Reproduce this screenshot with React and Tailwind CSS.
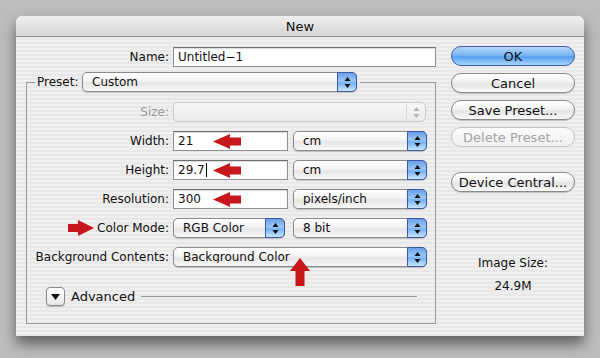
import React from "react";

const RED = "#c8161d";

function LeftArrow({ className }) {
  return (
    <svg width="28" height="15" viewBox="0 0 28 15" className={className}>
      <polygon points="0,7.5 17,0 17,3.5 28,3.5 28,11.5 17,11.5 17,15" fill={RED} />
    </svg>
  );
}

function RightArrow() {
  return (
    <svg width="26" height="16" viewBox="0 0 26 16">
      <polygon points="26,8 10,0 10,4 0,4 0,12 10,12 10,16" fill={RED} />
    </svg>
  );
}

function UpArrow({ className }) {
  return (
    <svg width="20" height="28" viewBox="0 0 20 28" className={className}>
      <polygon points="10,0 20,13 14.5,13 14.5,28 5.5,28 5.5,13 0,13" fill={RED} />
    </svg>
  );
}

function Stepper({ disabled }) {
  const c = disabled ? "#b5b5b5" : "#111";
  return (
    <svg width="7" height="13" viewBox="0 0 7 13">
      <polygon points="3.5,1 6.5,5 0.5,5" fill={c} />
      <polygon points="0.5,8 6.5,8 3.5,12" fill={c} />
    </svg>
  );
}

function Select({ value, className = "", disabled, children }) {
  if (disabled) {
    return (
      <div className={`flex h-[20px] items-center rounded-[5px] border border-[#cacaca] bg-[linear-gradient(#f6f6f6,#ececec)] ${className}`}>
        <span className="flex-1" />
        <div className="flex h-full w-[19px] items-center justify-center border-l border-[#dcdcdc]">
          <Stepper disabled />
        </div>
      </div>
    );
  }
  return (
    <div className={`relative flex h-[20px] items-center rounded-[5px] border border-[#8a8a8a] bg-[linear-gradient(#ffffff,#f3f3f3_45%,#e6e6e6_55%,#f7f7f7)] shadow-[0_1px_1px_rgba(0,0,0,0.18)] ${className}`}>
      <span className="flex-1 truncate pl-[9px] leading-none">{value}</span>
      <div className="-my-px -mr-px flex h-[20px] w-[20px] items-center justify-center rounded-r-[5px] border border-[#3d5aa6] bg-[linear-gradient(#6a9fe9,#9cc8f5_45%,#74b0f1_55%,#c8e6fe)]">
        <Stepper />
      </div>
      {children}
    </div>
  );
}

function TextField({ value, className = "", caret, children }) {
  return (
    <div className={`relative flex h-[20px] items-center border border-[#8f8f8f] border-t-[#6e6e6e] bg-white pl-[4px] shadow-[inset_0_1px_1px_rgba(0,0,0,0.15)] ${className}`}>
      <span className="leading-none">{value}</span>
      {caret && <span className="ml-px h-[14px] w-px bg-black" />}
      {children}
    </div>
  );
}

function Button({ label, primary, disabled }) {
  const style = primary
    ? "border-[#3f5ea9] bg-[linear-gradient(#b5d6f8,#7ab7f2_45%,#569ff0_55%,#a9d6fc)]"
    : disabled
    ? "border-[#c4c4c4] bg-[linear-gradient(#fbfbfb,#f0f0f0)] text-[#a3a3a3]"
    : "border-[#8a8a8a] bg-[linear-gradient(#ffffff,#f3f3f3_45%,#e3e3e3_55%,#fafafa)] shadow-[0_1px_1px_rgba(0,0,0,0.2)]";
  return (
    <div className={`flex h-[20px] w-[124px] items-center justify-center rounded-full border text-[13px] leading-none ${style}`}>
      {label}
    </div>
  );
}

function Row({ label, labelClass = "", children, arrow }) {
  return (
    <div className="flex h-[20px] items-center">
      <div className={`flex w-[134px] items-center justify-end gap-[3px] ${labelClass}`}>
        {arrow}
        <span>{label}</span>
      </div>
      <div className="ml-[4px] flex items-center">{children}</div>
    </div>
  );
}

export default function App() {
  return (
    <div className="h-[358px] w-[600px] bg-[#bdbdbd] pl-[16px] pt-[16px] font-['DejaVu_Sans',sans-serif] text-[12px] text-[#111]">
      <div className="flex h-[320px] w-[568px] flex-col overflow-hidden rounded-t-[6px] bg-[repeating-linear-gradient(to_bottom,#efefef_0px,#efefef_2px,#e8e8e8_2px,#e8e8e8_4px)] shadow-[0_8px_14px_rgba(0,0,0,0.5)]">
        <div className="flex h-[21px] shrink-0 items-center justify-center border-b border-[#8c8c8c] bg-[linear-gradient(#efefef,#d5d5d5)] pt-px text-[13px]">
          New
        </div>

        <div className="flex flex-1 pt-[10px]">
          {/* left side */}
          <div className="flex w-[420px] flex-col">
            <div className="flex h-[20px] items-center">
              <span className="w-[153px] text-right">Name:</span>
              <TextField value="Untitled−1" className="ml-[4px] w-[263px]" />
            </div>

            <fieldset className="ml-[10px] mt-[5px] w-[410px] border border-[#9a9a9a] pb-[17px] pl-[8px] pr-[8px] pt-[10px]">
              <legend className="px-[2px] pr-[3px]">
                <div className="flex items-center">
                  <span className="w-[45px]">Preset:</span>
                  <Select value="Custom" className="w-[275px]" />
                </div>
              </legend>

              <div className="flex flex-col gap-[9px]">
                <Row label="Size:" labelClass="text-[#9b9b9b]">
                  <Select disabled className="w-[253px]" />
                </Row>
                <Row label="Width:">
                  <TextField value="21" className="w-[115px]">
                    <LeftArrow className="absolute left-[39px] top-[2px]" />
                  </TextField>
                  <Select value="cm" className="ml-[5px] w-[134px]" />
                </Row>
                <Row label="Height:">
                  <TextField value="29.7" caret className="w-[115px]">
                    <LeftArrow className="absolute left-[39px] top-[2px]" />
                  </TextField>
                  <Select value="cm" className="ml-[5px] w-[134px]" />
                </Row>
                <Row label="Resolution:">
                  <TextField value="300" className="w-[115px]">
                    <LeftArrow className="absolute left-[39px] top-[2px]" />
                  </TextField>
                  <Select value="pixels/inch" className="ml-[5px] w-[134px]" />
                </Row>
                <Row label="Color Mode:" arrow={<RightArrow />}>
                  <Select value="RGB Color" className="w-[112px]" />
                  <Select value="8 bit" className="ml-[8px] w-[134px]" />
                </Row>
                <Row label="Background Contents:">
                  <Select value="Background Color" className="w-[254px]">
                    <UpArrow className="absolute left-[116px] top-[10px]" />
                  </Select>
                </Row>
              </div>

              <div className="mt-[20px] flex h-[19px] items-center">
                <div className="ml-[11px] flex h-[19px] w-[19px] items-center justify-center rounded-[4px] border border-[#8a8a8a] bg-[linear-gradient(#ffffff,#e6e6e6)] shadow-[0_1px_1px_rgba(0,0,0,0.2)]">
                  <svg width="9" height="6" viewBox="0 0 9 6">
                    <polygon points="0,0 9,0 4.5,6" fill="#111" />
                  </svg>
                </div>
                <span className="ml-[6px] text-[13px]">Advanced</span>
                <div className="ml-[6px] mr-[10px] h-[2px] flex-1 border-t border-[#9a9a9a] border-b-white" />
              </div>
            </fieldset>
          </div>

          {/* right side */}
          <div className="ml-[15px] -mt-px flex w-[124px] flex-col">
            <div className="flex flex-col gap-[7px]">
              <Button label="OK" primary />
              <Button label="Cancel" />
              <Button label="Save Preset..." />
              <Button label="Delete Preset..." disabled />
            </div>
            <div className="mt-[25px]">
              <Button label="Device Central..." />
            </div>
            <div className="mt-[64px] flex flex-col items-center gap-[8px] leading-[15px]">
              <span>Image Size:</span>
              <span>24.9M</span>
            </div>
          </div>
        </div>
      </div>
    </div>
  );
}
